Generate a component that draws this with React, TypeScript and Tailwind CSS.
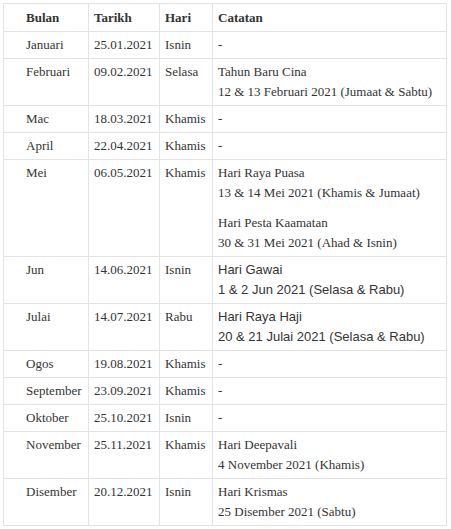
type Row = {
  bulan: string;
  tarikh: string;
  hari: string;
  notes: string[][];
  sans?: boolean;
};

const rows: Row[] = [
  { bulan: 'Januari', tarikh: '25.01.2021', hari: 'Isnin', notes: [['-']] },
  {
    bulan: 'Februari',
    tarikh: '09.02.2021',
    hari: 'Selasa',
    notes: [['Tahun Baru Cina', '12 & 13 Februari 2021 (Jumaat & Sabtu)']],
  },
  { bulan: 'Mac', tarikh: '18.03.2021', hari: 'Khamis', notes: [['-']] },
  { bulan: 'April', tarikh: '22.04.2021', hari: 'Khamis', notes: [['-']] },
  {
    bulan: 'Mei',
    tarikh: '06.05.2021',
    hari: 'Khamis',
    notes: [
      ['Hari Raya Puasa', '13 & 14 Mei 2021 (Khamis & Jumaat)'],
      ['Hari Pesta Kaamatan', '30 & 31 Mei 2021 (Ahad & Isnin)'],
    ],
  },
  {
    bulan: 'Jun',
    tarikh: '14.06.2021',
    hari: 'Isnin',
    notes: [['Hari Gawai', '1 & 2 Jun 2021 (Selasa & Rabu)']],
    sans: true,
  },
  {
    bulan: 'Julai',
    tarikh: '14.07.2021',
    hari: 'Rabu',
    notes: [['Hari Raya Haji', '20 & 21 Julai 2021 (Selasa & Rabu)']],
    sans: true,
  },
  { bulan: 'Ogos', tarikh: '19.08.2021', hari: 'Khamis', notes: [['-']] },
  { bulan: 'September', tarikh: '23.09.2021', hari: 'Khamis', notes: [['-']] },
  { bulan: 'Oktober', tarikh: '25.10.2021', hari: 'Isnin', notes: [['-']] },
  {
    bulan: 'November',
    tarikh: '25.11.2021',
    hari: 'Khamis',
    notes: [['Hari Deepavali', '4 November 2021 (Khamis)']],
  },
  {
    bulan: 'Disember',
    tarikh: '20.12.2021',
    hari: 'Isnin',
    notes: [['Hari Krismas', '25 Disember 2021 (Sabtu)']],
  },
];

const cell = 'border border-[#e3e3e3] px-[5px] py-[3px] align-top';

export default function App() {
  return (
    <div className="min-h-screen bg-white pl-[3px] pt-[3px] font-['Liberation_Serif',serif] text-[13px] leading-[20px] text-[#333]">
      <table className="w-[444px] table-fixed border-collapse">
        <colgroup>
          <col className="w-[85px]" />
          <col className="w-[71px]" />
          <col className="w-[53px]" />
          <col />
        </colgroup>
        <thead>
          <tr className="text-left font-bold">
            <th className={`${cell} pt-[4px] pl-[22px]`}>Bulan</th>
            <th className={`${cell} pt-[4px]`}>Tarikh</th>
            <th className={`${cell} pt-[4px]`}>Hari</th>
            <th className={`${cell} pt-[4px]`}>Catatan</th>
          </tr>
        </thead>
        <tbody>
          {rows.map((r) => (
            <tr key={r.bulan}>
              <td className={`${cell} pl-[22px]`}>{r.bulan}</td>
              <td className={cell}>{r.tarikh}</td>
              <td className={cell}>{r.hari}</td>
              <td className={`${cell} ${r.sans ? "font-['Liberation_Sans',sans-serif]" : ''}`}>
                <div className="flex flex-col gap-[10px]">
                  {r.notes.map((block, i) => (
                    <div key={i}>
                      {block.map((line) => (
                        <div key={line}>{line}</div>
                      ))}
                    </div>
                  ))}
                </div>
              </td>
            </tr>
          ))}
        </tbody>
      </table>
    </div>
  );
}
